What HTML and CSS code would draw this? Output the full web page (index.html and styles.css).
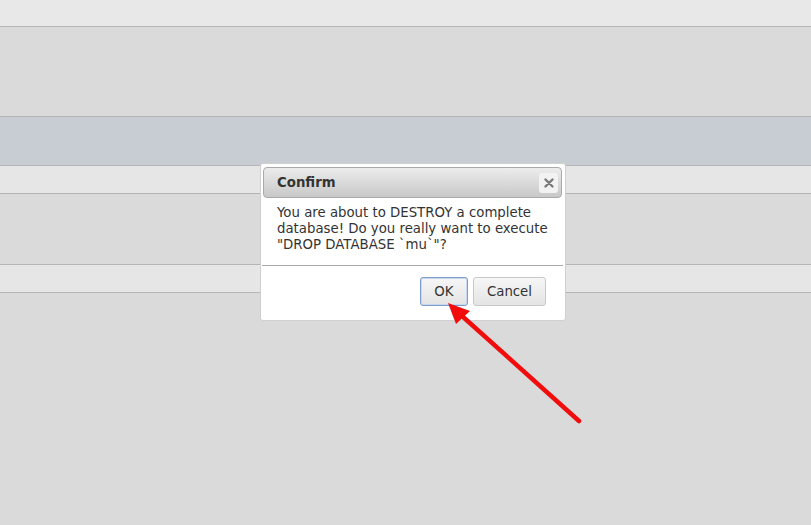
FILE: index.html
```html
<!DOCTYPE html>
<html>
<head>
<meta charset="utf-8">
<link rel="stylesheet" href="styles.css">
</head>
<body>
<div class="page">
  <div class="band band-top"></div>
  <div class="band band-gray h89"></div>
  <div class="band band-blue"></div>
  <div class="band band-light h27"></div>
  <div class="band band-gray h70"></div>
  <div class="band band-light h27"></div>
  <div class="band band-gray rest"></div>
</div>

<div class="dialog">
  <div class="titlebar">
    <span class="title">Confirm</span>
    <span class="close">
      <svg width="10" height="10" viewBox="0 0 10 10"><path d="M1.5 1.5 L8.5 8.5 M8.5 1.5 L1.5 8.5" stroke="#7a7a7a" stroke-width="2.4" stroke-linecap="round"/></svg>
    </span>
  </div>
  <div class="content">You are about to DESTROY a complete database! Do you really want to execute "DROP DATABASE `mu`"?</div>
  <div class="buttons">
    <button class="btn ok">OK</button>
    <button class="btn">Cancel</button>
  </div>
</div>

<svg class="arrow" width="811" height="525" viewBox="0 0 811 525">
  <line x1="579" y1="421" x2="462" y2="316" stroke="#f20d0d" stroke-width="4.5" stroke-linecap="round"/>
  <polygon points="448,303 470,311 456,324" fill="#f20d0d"/>
</svg>
</body>
</html>
```
FILE: styles.css
```css
html, body { margin: 0; padding: 0; }
body {
  width: 811px; height: 525px; overflow: hidden;
  font-family: "DejaVu Sans", sans-serif;
  background: #dadada;
  position: relative;
}
.page { display: flex; flex-direction: column; height: 525px; }
.band { border-bottom: 1px solid #b5b5b5; flex: none; }
.band-top { height: 26px; background: #e8e8e8; }
.band-gray { background: #dadada; }
.band-blue { height: 48px; background: #c8cdd4; }
.band-light { background: #e6e6e6; }
.h89 { height: 89px; }
.h27 { height: 27px; }
.h70 { height: 70px; }
.rest { flex: 1; border-bottom: none; }

.dialog {
  position: absolute;
  left: 260px; top: 163px;
  width: 306px; height: 158px;
  box-sizing: border-box;
  background: #fff;
  border: 1px solid #d0d0d0;
  border-radius: 3px;
  padding: 3px 3px 0 2px;
  display: flex; flex-direction: column;
}
.titlebar {
  height: 31px;
  box-sizing: border-box;
  border: 1px solid #aaa;
  border-radius: 4px;
  background: linear-gradient(#ececec, #c8c8c8);
  display: flex; align-items: center; justify-content: space-between;
  padding: 0 3px 0 13px;
}
.title { font-weight: bold; font-size: 13.3px; color: #333; }
.close {
  width: 19px; height: 20px;
  background: #f2f2f2;
  border-radius: 3px;
  display: flex; align-items: center; justify-content: center;
}
.content {
  font-size: 13.3px; line-height: 16px; color: #333;
  padding: 7px 14px 0 15px;
  height: 68px;
  box-sizing: border-box;
  border-bottom: 1px solid #aaa;
  margin: 0 -1px;
}
.buttons {
  display: flex; justify-content: flex-end; gap: 5px;
  padding: 11px 16px 0 0;
}
.btn {
  font-family: "DejaVu Sans", sans-serif;
  font-size: 13.3px; color: #333;
  height: 29px;
  border: 1px solid #c8c8c8;
  border-radius: 3px;
  background: linear-gradient(#f6f6f6, #e4e4e4);
  padding: 0 13px;
}
.ok { width: 48px; padding: 0; border-color: #7d9cc9; box-shadow: inset 0 0 0 1px #c9d8ee; }
.arrow { position: absolute; left: 0; top: 0; pointer-events: none; }
```
